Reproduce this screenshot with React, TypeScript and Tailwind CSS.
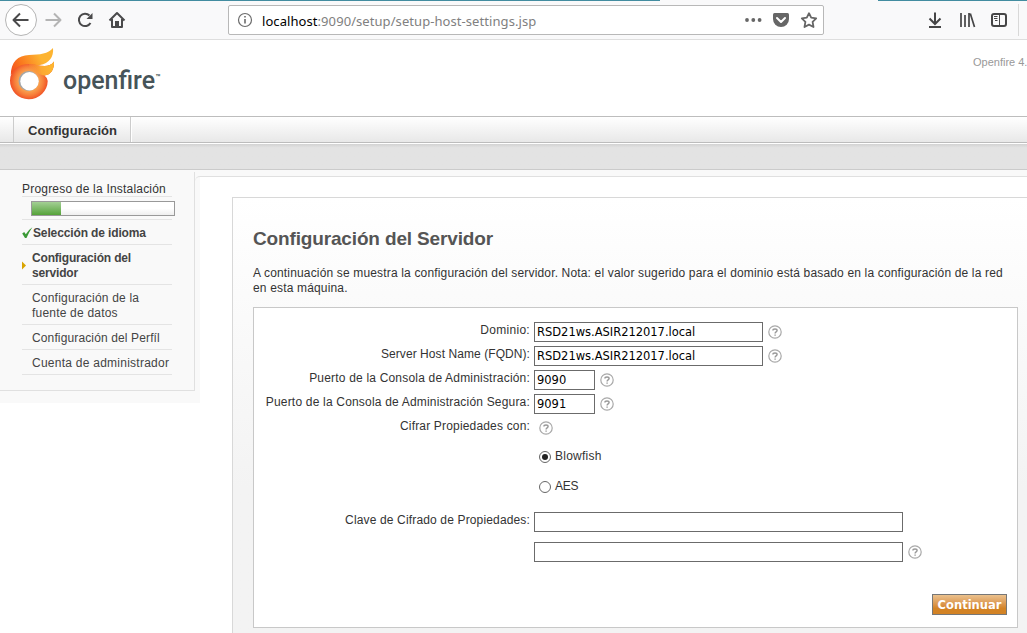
import React from "react";

function Help() {
  return (
    <svg width="14" height="14" viewBox="0 0 14 14" className="block shrink-0">
      <circle cx="7" cy="7" r="6.2" fill="#fff" stroke="#a9a9a9" strokeWidth="1.2" />
      <path d="M4.9 5.6C4.9 3.4 9.1 3.4 9.1 5.6C9.1 7 7.1 6.9 7.1 8.4M7.1 9.4V10.8" fill="none" stroke="#999" strokeWidth="1.4" />
    </svg>
  );
}

function Logo() {
  return (
    <svg width="170" height="70" viewBox="0 40 170 70" className="block">
      <defs>
        <radialGradient id="ring" gradientUnits="userSpaceOnUse" cx="29" cy="81" r="19">
          <stop offset="0.5" stopColor="#f9a552" />
          <stop offset="0.75" stopColor="#f77f3a" />
          <stop offset="1" stopColor="#f04e24" />
        </radialGradient>
        <linearGradient id="upper" gradientUnits="userSpaceOnUse" x1="12" y1="72" x2="50" y2="52">
          <stop offset="0" stopColor="#f4511e" />
          <stop offset="0.3" stopColor="#fa7a1e" />
          <stop offset="0.75" stopColor="#fdb431" />
        </linearGradient>
        <linearGradient id="tail" gradientUnits="userSpaceOnUse" x1="27" y1="72" x2="50" y2="66">
          <stop offset="0" stopColor="#fa8f35" stopOpacity="0" />
          <stop offset="0.6" stopColor="#fca833" />
          <stop offset="1" stopColor="#fdb62f" />
        </linearGradient>
      </defs>
      <path d="M10.800 75C10.800 62 18 55.500 29 55C40 54.500 48 54 53 48C54 57 49 63.500 40 65C30 66 18 65 10.800 75Z" fill="url(#upper)" />
      <path d="M10 80.500C10 70 19 64 29 64C37 64 48 70 54 61.500C54.500 69 51 75 44.500 75.500Q47.700 78 47.700 81A18.800 18.500 0 0 1 10 80.500Z" fill="url(#ring)" />
      <path d="M29 64C37 64 48 70 54 61.500C54.500 69 51 75 44.500 75.500C40 75.500 37 71.500 30 71Z" fill="url(#tail)" />
      <circle cx="28.500" cy="81" r="10" fill="#a4a6a8" />
      <circle cx="29.500" cy="81.300" r="9.200" fill="#fff" />
      <text x="63" y="89" textLength="92" lengthAdjust="spacingAndGlyphs" fontFamily="Roboto, sans-serif" fontWeight="500" fontSize="26" fill="#465459">openfire</text>
      <text x="155.500" y="79.500" textLength="5" lengthAdjust="spacingAndGlyphs" fontFamily="Roboto, sans-serif" fontWeight="700" fontSize="8" fill="#465459">™</text>
    </svg>
  );
}

function Toolbar() {
  return (
    <div className="h-10 bg-[#f9f9fa] border-b border-[#dedede] flex flex-col">
      <div className="h-px flex justify-between shrink-0">
        <div className="w-[660px] bg-[#428ca0]" />
        <div className="w-[149px] bg-[#428ca0]" />
      </div>
      <div className="flex h-[38px] items-center">
        <svg width="228" height="38" viewBox="0 1 228 38" className="block shrink-0" fill="none" stroke="#4a4a4b" strokeWidth="2">
          <circle cx="21" cy="20" r="15.500" fill="#fff" stroke="#b5b5b5" strokeWidth="1" />
          <path d="M28.500 20H14.500M20 13.500L13.500 20L20 26.500" strokeLinejoin="round" />
          <path d="M45.500 20H59.500M54 13.500L60.500 20L54 26.500" stroke="#b4b4b4" strokeLinejoin="round" />
          <path d="M90.500 23A6.200 6.200 0 1 1 89.500 15.500" />
          <path d="M92.500 13V19H86.500Z" fill="#4a4a4b" stroke="none" />
          <path d="M109.500 20.500L117 13L124.500 20.500M112 19V27H122V19" strokeLinejoin="round" />
          <path d="M115 21H119V27H115Z" fill="#4a4a4b" stroke="none" />
        </svg>
        <div className="flex h-[30px] w-[596px] shrink-0 items-center rounded-[2px] border border-[#b8b8b8] bg-white">
          <svg width="32" height="28" viewBox="229 6 32 28" className="block shrink-0">
            <circle cx="245" cy="20" r="6.500" fill="none" stroke="#6c6c6c" strokeWidth="1.200" />
            <path d="M245 19V23.500M245 16V17.600" stroke="#6c6c6c" strokeWidth="1.600" />
          </svg>
          <div className="ml-px mt-[2px] whitespace-pre font-['Noto_Sans',sans-serif] text-[13px] leading-[28px] tracking-[0.07px] text-[#808080]">
            <span className="text-black">localhost</span>:9090/setup/setup-host-settings.jsp
          </div>
          <svg width="84" height="28" viewBox="739 6 84 28" className="ml-auto block shrink-0" fill="#666">
            <circle cx="747" cy="20" r="1.900" />
            <circle cx="753.300" cy="20" r="1.900" />
            <circle cx="759.600" cy="20" r="1.900" />
            <path d="M774.500 13H787.500Q789 13 789 14.500V19A8 8 0 0 1 773 19V14.500Q773 13 774.500 13Z" />
            <path d="M777 18L781 22L785 18" fill="none" stroke="#fff" strokeWidth="2" strokeLinecap="round" strokeLinejoin="round" />
            <path d="M809 13.200L811.200 17.700L816.200 18.400L812.600 21.900L813.500 27L809 24.600L804.500 27L805.400 21.900L801.800 18.400L806.800 17.700Z" fill="none" stroke="#666" strokeWidth="1.800" strokeLinejoin="round" />
          </svg>
        </div>
        <svg width="203" height="38" viewBox="824 1 203 38" className="block shrink-0" fill="none" stroke="#454546" strokeWidth="2">
          <path d="M935 12.500V23.500M929.500 18.500L935 24L940.500 18.500M929 27H941" />
          <path d="M961 13V27M965 15V27M969 13V27M970.300 13.500L974.500 27" strokeWidth="1.700" />
          <rect x="992" y="14" width="14" height="12" rx="2" />
          <path d="M999.500 14V26M994 16.500H997.500M994 18.500H997.500M995 20.500H997.500" strokeWidth="1" />
          <path d="M1018.500 4V36" stroke="#d8d8d8" strokeWidth="1" />
        </svg>
      </div>
    </div>
  );
}

function Sidebar() {
  return (
    <aside className="h-[233px] w-[200px] shrink-0 bg-[#f9f9f9] pt-[2px]">
      <div className="h-[219px] w-[195px] border-r border-b border-[#e0e0e0] pl-[22px] pt-[9px] text-[12px] leading-[15px] text-[#444]">
        <div className="h-[16px] w-[150px] whitespace-nowrap border-b border-[#e4e4e4] text-[#333] pt-px">
          <span className="tracking-[0.2px]">Progreso de la Instalación</span>
        </div>
        <div className="h-[23px] w-[150px] border-b border-[#e4e4e4] pl-[9px] pt-[4px]">
          <div className="h-[15px] w-[144px] border border-[#999] bg-linear-to-b from-white from-50% to-[#eee]">
            <div className="h-full w-[29px] bg-linear-to-b from-[#a3cf94] to-[#55a338]" />
          </div>
        </div>
        <div className="flex h-[25px] w-[150px] items-start border-b border-[#e4e4e4] pt-[6px] font-bold tracking-[-0.13px]">
          <svg width="11" height="15" viewBox="0 0 11 15" className="-mt-px block shrink-0">
            <path d="M0.200 8.500L2.200 7L3.800 9.300Q6 5 10.400 2.200Q6.900 7 4.500 13H3Z" fill="#3b9a37" />
          </svg>
          <span className="whitespace-nowrap">Selección de idioma</span>
        </div>
        <div className="flex h-[40px] w-[150px] items-start border-b border-[#e4e4e4] pt-[6px] font-bold tracking-[-0.18px]">
          <svg width="10" height="30" viewBox="0 0 10 30" className="block shrink-0">
            <path d="M0 10.500L4 14.500L0 18.500Z" fill="#d9a400" />
          </svg>
          <span>Configuración del<br />servidor</span>
        </div>
        <div className="h-[40px] w-[150px] border-b border-[#e4e4e4] pl-[10px] pt-[6px] tracking-[0.2px]">
          <span>Configuración de la<br />fuente de datos</span>
        </div>
        <div className="h-[25px] w-[150px] whitespace-nowrap border-b border-[#e4e4e4] pl-[10px] pt-[6px] tracking-[0.13px]">Configuración del Perfíl</div>
        <div className="h-[25px] w-[150px] whitespace-nowrap border-b border-[#e4e4e4] pl-[10px] pt-[6px] tracking-[0.25px]">Cuenta de administrador</div>
      </div>
    </aside>
  );
}

function Field({ label, value, wide, spacing = "tracking-[0.19px]" }: { label: string; value: string; wide: boolean; spacing?: string }) {
  return (
    <div className="flex h-6 items-start">
      <div className={spacing + " w-[276px] shrink-0 whitespace-nowrap pt-px text-right leading-[15px]"}>{label}</div>
      <div className={(wide ? "w-[229px]" : "w-[61px]") + " ml-1 h-5 border border-[#6b6b6b] bg-white pl-[2px] font-['DejaVu_Sans',sans-serif] text-[11.5px] leading-[19px] tracking-[-0.02px] text-black"}>{value}</div>
      <div className="ml-[5px] pt-[3px]"><Help /></div>
    </div>
  );
}

function Radio({ label, checked }: { label: string; checked: boolean }) {
  return (
    <div className="flex h-[30px] items-start pl-[285px]">
      <svg width="12" height="12" viewBox="0 0 12 12" className="mt-[3px] block">
        <circle cx="6" cy="6" r="5.500" fill="#fff" stroke="#666" />
        {checked && <circle cx="6" cy="6" r="3" fill="#222" />}
      </svg>
      <span className={(checked ? "tracking-[0.25px]" : "tracking-[-0.3px]") + " ml-1 pt-px leading-[15px]"}>{label}</span>
    </div>
  );
}

export default function App() {
  return (
    <div className="flex h-[633px] w-[1027px] flex-col overflow-hidden bg-white font-['Liberation_Sans',sans-serif] text-[12px] text-[#333]">
      <Toolbar />
      <header className="flex h-[76px] shrink-0 justify-between overflow-hidden">
        <Logo />
        <div className="w-[54px] whitespace-nowrap pt-[15px] text-[11px] leading-[14px] text-[#999]">Openfire 4.</div>
      </header>
      <nav className="flex h-[27px] shrink-0 border-y border-t-[#bdbdbd] border-b-[#bcbcbc] bg-linear-to-b from-white to-[#e8e8e8]">
        <div className="w-[13px] shrink-0" />
        <div className="w-[118px] border-x border-[#ccc] pl-[14px] text-[13px] font-bold leading-[27px] tracking-[0.08px] text-[#333]">Configuración</div>
        <div className="w-px bg-white" />
      </nav>
      <div className="h-[27px] shrink-0 border-b border-t border-b-[#cbcbcb] border-t-white bg-linear-to-b from-[#d2d2d2] to-[#e3e3e3] to-15%" />
      <div className="flex min-h-0 flex-1 bg-linear-to-b from-[#f9f9f9] from-[6px] to-white to-[6px]">
        <Sidebar />
        <main className="-ml-[5px] mt-[6px] flex-1">
          <div className="h-full rounded-tl-[5px] border-t border-[#e0e0e0] pl-[37px] pt-5">
            <section className="h-[440px] border-l border-t border-[#d8d8d8] bg-linear-to-b from-white to-[#f3f3f3] to-[290px] pl-5">
              <h1 className="pt-[29px] text-[19px] font-bold leading-[24px] tracking-[-0.15px] text-[#555]">Configuración del Servidor</h1>
              <p className="mt-[15px] whitespace-nowrap leading-[15px] tracking-[0.16px]">
                A continuación se muestra la configuración del servidor. Nota: el valor sugerido para el dominio está basado en la configuración de la red<br />
                en esta máquina.
              </p>
              <div className="mt-[11px] h-[321px] w-[765px] border border-[#c8c8c8] bg-white pt-[14px]">
                <Field label="Dominio:" value="RSD21ws.ASIR212017.local" wide spacing="tracking-[0.3px]" />
                <Field label="Server Host Name (FQDN):" value="RSD21ws.ASIR212017.local" wide spacing="tracking-[0.07px]" />
                <Field label="Puerto de la Consola de Administración:" value="9090" wide={false} />
                <Field label="Puerto de la Consola de Administración Segura:" value="9091" wide={false} />
                <div className="flex h-[30px] items-start">
                  <div className="w-[276px] pt-px text-right leading-[15px] tracking-[0.17px]">Cifrar Propiedades con:</div>
                  <div className="ml-[9px] pt-[3px]"><Help /></div>
                </div>
                <Radio label="Blowfish" checked />
                <Radio label="AES" checked={false} />
                <div className="mt-1 flex h-[30px] items-start">
                  <div className="w-[276px] pt-px text-right leading-[15px] tracking-[0.15px]">Clave de Cifrado de Propiedades:</div>
                  <div className="ml-1 h-5 w-[369px] border border-[#6b6b6b] bg-white" />
                </div>
                <div className="flex h-[52px] items-start pl-[280px]">
                  <div className="h-5 w-[369px] border border-[#6b6b6b] bg-white" />
                  <div className="ml-[5px] pt-[3px]"><Help /></div>
                </div>
                <div className="flex justify-end pr-[10px]">
                  <button className="h-[21px] w-[75px] whitespace-nowrap border border-[#777] bg-linear-to-b from-[#ebc18d] to-[#d38325] to-70% text-center font-['DejaVu_Sans',sans-serif] text-[11.5px] font-bold leading-[20px] text-white">Continuar</button>
                </div>
              </div>
            </section>
          </div>
        </main>
      </div>
    </div>
  );
}
